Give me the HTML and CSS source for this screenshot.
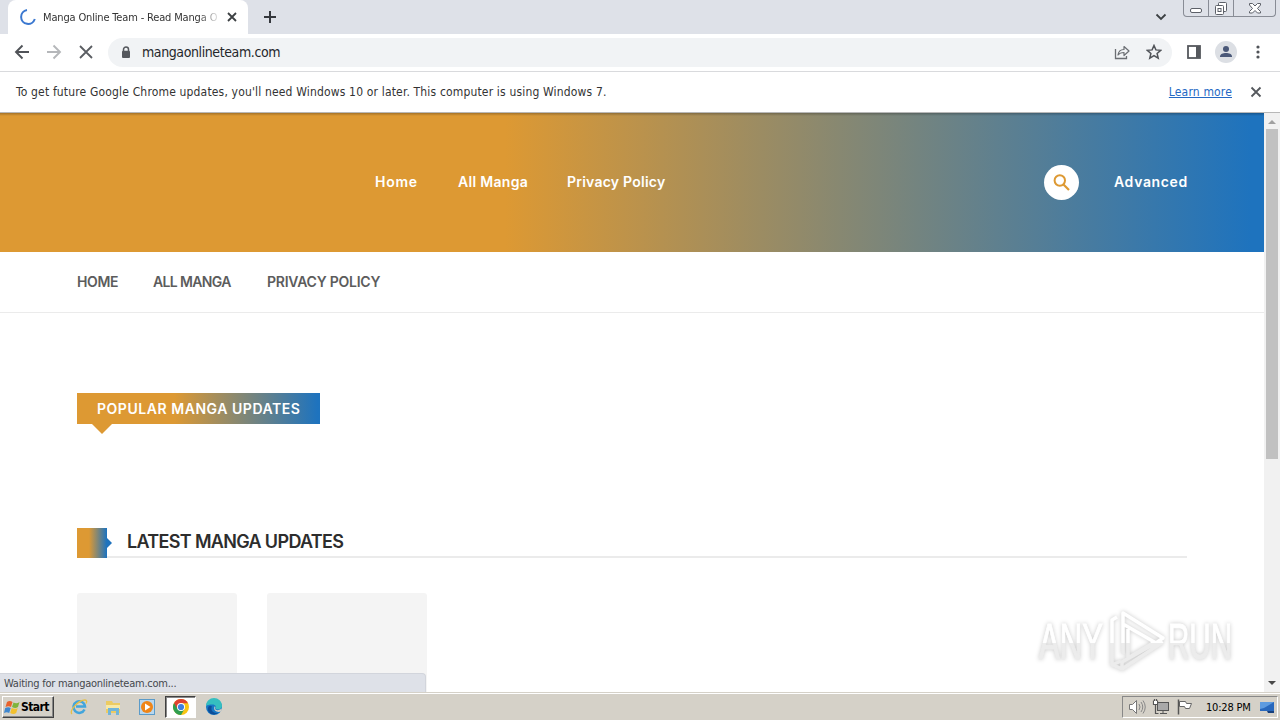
FILE: index.html
```html
<!DOCTYPE html>
<html lang="en">
<head>
    <meta charset="UTF-8">
    <meta name="viewport" content="width=device-width, initial-scale=1.0">
    <title>Manga Online Team - Read Manga Online</title>
    <link rel="stylesheet" href="styles.css">
</head>
<body>

    <!-- tab strip -->
    <div class="tabstrip">
        <div class="tab">
            <svg class="spinner" width="18" height="18" viewBox="0 0 18 18"><path d="M8 2A7 7 0 1 0 15.8 11" fill="none" stroke="#3b78d0" stroke-width="2"/></svg>
            <span class="tab-title">Manga Online Team - Read Manga O</span>
            <svg class="tab-close" width="10" height="10" viewBox="0 0 10 10"><path d="M1 1l8 8M9 1L1 9" stroke="#3c4043" stroke-width="1.8"/></svg>
        </div>
        <svg class="new-tab" width="12" height="12" viewBox="0 0 12 12"><path d="M6 0v12M0 6h12" stroke="#35383d" stroke-width="2"/></svg>
        <svg class="tab-search" width="12" height="8" viewBox="0 0 12 8"><path d="M1.5 1.5L6 6l4.500-4.500" fill="none" stroke="#3c4043" stroke-width="1.8"/></svg>
        <div class="window-buttons">
            <span><svg width="14" height="16" viewBox="0 0 14 16"><rect x="1.500" y="8.500" width="11" height="4" rx="1.500" fill="#fff" stroke="#5c6068"/></svg></span>
            <span><svg width="14" height="16" viewBox="0 0 14 16"><rect x="4.500" y="2.500" width="8" height="9" rx="1" fill="#fff" stroke="#5c6068"/><rect x="1.500" y="5.500" width="8" height="9" rx="1" fill="#fff" stroke="#5c6068"/><rect x="4" y="8.500" width="3" height="3" fill="none" stroke="#5c6068"/></svg></span>
            <span><svg width="14" height="16" viewBox="0 0 14 16"><path d="M1.500 3.500h3L7 6l2.500-2.500h3v1.500L9.500 8.500l3 3V13h-3L7 10.500 4.500 13h-3v-1.500l3-3-3-3.500z" fill="#fff" stroke="#5c6068"/></svg></span>
        </div>
    </div>

    <!-- toolbar -->
    <div class="toolbar">
        <svg class="nav-icon" width="16" height="16" viewBox="0 0 16 16"><path d="M15 8H2M8.500 1.500L2 8l6.500 6.500" fill="none" stroke="#505358" stroke-width="1.900"/></svg>
        <svg class="nav-icon" width="16" height="16" viewBox="0 0 16 16"><path d="M1 8h13M7.500 1.500L14 8l-6.500 6.500" fill="none" stroke="#b5b7ba" stroke-width="1.900"/></svg>
        <svg class="nav-icon" width="16" height="16" viewBox="0 0 16 16"><path d="M2 2l12 12M14 2L2 14" stroke="#5a5d62" stroke-width="1.800"/></svg>
        <div class="omnibox">
            <svg width="10" height="13" viewBox="0 0 10 13"><path d="M2.500 5V3.500a2.500 2.500 0 0 1 5 0V5" fill="none" stroke="#55585d" stroke-width="1.500"/><rect x="1" y="4.800" width="8" height="7.200" rx="1" fill="#55585d"/></svg>
            <span class="url">mangaonlineteam.com</span>
            <svg class="share" width="16" height="16" viewBox="0 0 16 16"><path d="M1.500 5v9.500h11V12" fill="none" stroke="#6b6e73" stroke-width="1.300"/><path d="M4 11C4.500 7 7 5.500 10 5.500V2.500L15 7l-5 4.500V8.500C7.500 8.500 5.500 9 4 11z" fill="none" stroke="#6b6e73" stroke-width="1.200" stroke-linejoin="round"/></svg>
            <svg width="16" height="16" viewBox="0 0 16 16"><path d="M8 1.500l1.900 4.400 4.800.4-3.600 3.200 1.100 4.700L8 11.700l-4.200 2.500 1.100-4.700L1.300 6.300l4.800-.4z" fill="none" stroke="#505358" stroke-width="1.500"/></svg>
        </div>
        <svg class="side-panel" width="14" height="14" viewBox="0 0 14 14"><rect x="1" y="1" width="12" height="12" fill="none" stroke="#55585d" stroke-width="1.800"/><path d="M9 1h4v12H9z" fill="#55585d"/></svg>
        <svg class="avatar" width="22" height="22" viewBox="0 0 22 22"><circle cx="11" cy="11" r="11" fill="#dcdfe4"/><circle cx="11" cy="8" r="3" fill="#4a5878"/><path d="M5 15.500c0-2.500 3-3.500 6-3.500s6 1 6 3.500v.5H5z" fill="#4a5878"/></svg>
        <svg class="kebab" width="4" height="14" viewBox="0 0 4 14"><g fill="#505358"><circle cx="2" cy="2" r="1.600"/><circle cx="2" cy="7" r="1.600"/><circle cx="2" cy="12" r="1.600"/></g></svg>
    </div>

    <div class="infobar">
        <span class="infobar-text">To get future Google Chrome updates, you'll need Windows 10 or later. This computer is using Windows 7.</span>
        <a class="learn-more">Learn more</a>
        <svg width="12" height="12" viewBox="0 0 12 12"><path d="M1.500 1.500l9 9M10.500 1.500l-9 9" stroke="#55585d" stroke-width="1.800"/></svg>
    </div>

    <!-- page -->
    <div class="viewport">
        <div class="page">
            <header class="site-header">
                <nav class="main-nav">
                    <a class="n-home">Home</a>
                    <a class="n-all">All Manga</a>
                    <a class="n-privacy">Privacy Policy</a>
                </nav>
                <div class="search-btn">
                    <svg width="17" height="17" viewBox="0 0 17 17"><circle cx="6.800" cy="6.500" r="5.200" fill="none" stroke="#dd9933" stroke-width="2"/><path d="M10.500 10.500l5.500 5.500" stroke="#dd9933" stroke-width="2.200"/></svg>
                </div>
                <a class="advanced">Advanced</a>
            </header>
            <nav class="sub-nav">
                <a class="s-home">HOME</a>
                <a class="s-all">ALL MANGA</a>
                <a class="s-privacy">PRIVACY POLICY</a>
            </nav>
            <main class="content">
                <div class="popular"><span>POPULAR MANGA UPDATES</span></div>
                <div class="latest">
                    <i class="latest-mark"></i>
                    <h4>LATEST MANGA UPDATES</h4>
                </div>
                <div class="cards">
                    <div class="card"></div>
                    <div class="card"></div>
                </div>
            </main>
        </div>
        <div class="scrollbar">
            <svg width="16" height="16" viewBox="0 0 16 16"><path d="M4 11l4-4 4 4z" fill="#a0a0a0"/></svg>
            <div class="thumb"></div>
            <svg class="down" width="16" height="16" viewBox="0 0 16 16"><path d="M4 5h8L8 9z" fill="#484848"/></svg>
        </div>
        <div class="status-bubble">Waiting for mangaonlineteam.com...</div>
        <svg class="watermark" width="212" height="78" viewBox="0 0 212 78">
            <defs>
                <linearGradient id="wm" x1="0" y1="0" x2="0" y2="78" gradientUnits="userSpaceOnUse">
                    <stop offset=".53" stop-color="#fff"/>
                    <stop offset=".53" stop-color="#ececec"/>
                </linearGradient>
            </defs>
            <g class="wm-text" fill="url(#wm)" stroke="url(#wm)" stroke-width="1">
                <text x="9" y="57" textLength="64" lengthAdjust="spacingAndGlyphs">ANY</text>
                <text x="138" y="57" textLength="64" lengthAdjust="spacingAndGlyphs">RUN</text>
            </g>
            <path d="M87 15l-5 3v45l9-4M93 52V11l40 25-7 5-33-19M83 63l9 4 41-27M92 67v-7l34-19M98 27v29l25-15" fill="none" stroke="url(#wm)" stroke-width="3.500" stroke-linejoin="round"/>
        </svg>
    </div>

    <!-- windows taskbar -->
    <div class="taskbar">
        <div class="start">
            <svg width="17" height="15" viewBox="0 0 17 15"><path d="M3 2c2-1.500 4-1 5.500 0L7 7C5.500 6 3.500 6 1.500 7z" fill="#e8622c"/><path d="M9.500 2.500c2 1 4 1 6-.5L14 7c-2 1.500-4 1-6 0z" fill="#7fb43c"/><path d="M1.200 8c2-1 4-1 5.500 0l-1.500 5C3.500 12 2 12 0 13z" fill="#3f87cf"/><path d="M7.700 8c2 1 4 1.200 6 0l-1.500 5c-2 1.500-4 1-6 0z" fill="#f2c02e"/></svg>
            <span>Start</span>
        </div>
        <div class="task">
            <svg width="18" height="18" viewBox="0 0 18 18"><path d="M14.500 11.500A5.800 5.800 0 1 1 15 8.500H6" fill="none" stroke="#42a5dc" stroke-width="2.500"/><path d="M2 16C-1 13 8 2 15 2c2 0 2 2 1 3.500" fill="none" stroke="#e6bf45" stroke-width="1.300"/></svg>
        </div>
        <div class="task">
            <svg width="18" height="18" viewBox="0 0 18 18"><path d="M2 3h6l1 2h7v10H2z" fill="#eccb62"/><path d="M2 7h14v4H2z" fill="#f8e9a6"/><path d="M4 10h11v7h-3v-4H7v4H4z" fill="#71b5d9"/></svg>
        </div>
        <div class="task">
            <svg width="18" height="18" viewBox="0 0 18 18"><rect x="1.500" y="1.500" width="15" height="15" fill="#b9d7ee" stroke="#5b9bc9"/><circle cx="9" cy="9" r="6" fill="#ef8518"/><path d="M7 5.500v7L12.500 9z" fill="#fff"/></svg>
        </div>
        <div class="task active">
            <svg width="16" height="16" viewBox="0 0 16 16"><circle cx="8" cy="8" r="8" fill="#f9c513"/><path d="M8 8L1.070 4A8 8 0 0 0 8 16l3.500-6z" fill="#2f9e50"/><path d="M8 4.200h6.930A8 8 0 0 0 1.070 4L4.500 10z" fill="#df4232"/><circle cx="8" cy="8" r="4" fill="#fff"/><circle cx="8" cy="8" r="3.100" fill="#3f7fe0"/></svg>
        </div>
        <div class="task">
            <svg width="18" height="18" viewBox="0 0 18 18"><circle cx="9" cy="9" r="8" fill="#1677c5"/><path d="M1 8a8 8 0 0 1 16 0c0 3-3 4-6.500 3 1.500-2 0-4.500-3-4.500C4.500 6.500 2 7 1 8z" fill="#35bfc0"/><path d="M7 8.500c-2 3 1 7 6 6.500-6 4-11-1-10-5 .5-2 2-3 4-1.500z" fill="#0c4e99"/><path d="M9.500 8.500c2 0 0 2 1 3 2 1.500 5 0 6.500-1l-1 3c-4 1.500-8-1-6.500-5z" fill="#d5d1c8"/></svg>
        </div>
        <div class="tray">
            <svg width="18" height="18" viewBox="0 0 18 18"><path d="M1.500 6.500h3l4-4v13l-4-4h-3z" fill="#fff" stroke="#777"/><path d="M11 6q2 3 0 6M13 4q3.500 5 0 10M15 2.500q4.500 6.500 0 13" fill="none" stroke="#888"/></svg>
            <svg width="18" height="18" viewBox="0 0 18 18"><rect x="5.500" y="4.500" width="11" height="8" fill="#a9a9a9" stroke="#555"/><path d="M8 15.500h7M11 13v2" stroke="#555"/><path d="M1.500 2.500v4h4v-4M2.500 1v2M4.500 1v2M3.500 7v8.500h3" fill="none" stroke="#555" stroke-width="1.200"/><path d="M2 3h3v3H2z" fill="#fff"/></svg>
            <svg width="18" height="18" viewBox="0 0 18 18"><path d="M3.500 3.500h6l1 2h5l-2 5h-4l-1-2h-5z" fill="#fff" stroke="#666"/><path d="M2.500 1.500v15" stroke="#555" stroke-width="1.500"/></svg>
            <span class="clock">10:28 PM</span>
            <svg width="16" height="16" viewBox="0 0 16 16"><path d="M1 3h14v9H1z" fill="#2868bd"/><path d="M1 3h14L5 9 1 10z" fill="#5d9be0"/><path d="M8 12h7v2H9z" fill="#163f7d"/></svg>
        </div>
    </div>

</body>
</html>
```
FILE: styles.css
```css
* {
    box-sizing: border-box;
}
body {
    margin: 0;
    width: 1280px;
    height: 720px;
    overflow: hidden;
    display: flex;
    flex-direction: column;
    background: #fff;
    font-family: "DejaVu Sans Condensed", "DejaVu Sans", sans-serif;
    font-stretch: condensed;
    color: #333;
}
svg {
    display: block;
    flex: none;
}
span, a {
    white-space: nowrap;
}

/* tab strip */
.tabstrip {
    height: 34px;
    flex: none;
    display: flex;
    align-items: center;
    background: #dee1e8;
    padding-left: 8px;
}
.tab {
    width: 240px;
    height: 34px;
    display: flex;
    align-items: center;
    background: #fff;
    border-radius: 8px 8px 0 0;
    padding: 0 11px;
}
.tab-title {
    width: 175px;
    margin-left: 6px;
    font-size: 11px;
    letter-spacing: -0.16px;
    -webkit-mask-image: linear-gradient(to right, #000 155px, transparent 178px);
}
.tab-close {
    margin-left: 9px;
}
.new-tab {
    margin-left: 16px;
}
.tab-search {
    margin-left: auto;
}
.window-buttons {
    align-self: flex-start;
    display: flex;
    width: 93px;
    height: 17px;
    margin: 0 4px 0 16px;
    border: 1px solid #888c95;
    border-top: 0;
    border-radius: 0 0 4px 4px;
}
.window-buttons span {
    width: 25px;
    display: flex;
    justify-content: center;
    border-right: 1px solid #888c95;
}
.window-buttons span:last-child {
    flex: 1;
    border-right: 0;
}

/* toolbar */
.toolbar {
    height: 38px;
    flex: none;
    display: flex;
    align-items: center;
    padding: 0 20px 1px 14px;
    border-bottom: 1px solid #d9dadd;
}
.nav-icon {
    margin-right: 16px;
}
.omnibox {
    width: 1064px;
    height: 29px;
    display: flex;
    align-items: center;
    margin-left: -2px;
    padding: 0 10px 0 13px;
    border-radius: 15px;
    background: #f1f3f5;
}
.url {
    margin-left: 11px;
    font-size: 14px;
    letter-spacing: -0.4px;
    color: #25272b;
}
.share {
    margin-left: auto;
    margin-right: 16px;
}
.side-panel {
    margin-left: 15px;
}
.avatar {
    margin-left: 14px;
}
.kebab {
    margin-left: auto;
}

.infobar {
    height: 41px;
    flex: none;
    display: flex;
    align-items: center;
    padding: 0 18px 1px 16px;
    border-bottom: 1px solid #b8b8b8;
    font-size: 12px;
    letter-spacing: 0.165px;
}
.learn-more {
    margin-left: auto;
    margin-right: 18px;
    color: #2468c4;
    text-decoration: underline;
}

/* page */
.viewport {
    position: relative;
    flex: 1;
    display: flex;
    min-height: 0;
    overflow: hidden;
    font-family: Inter, sans-serif;
}
.page {
    width: 1264px;
}
.site-header {
    height: 139px;
    display: flex;
    align-items: center;
    padding: 0 76px 0 375px;
    background:
        linear-gradient(rgba(0, 0, 0, 0.25), transparent 3px),
        linear-gradient(to right, #dd9933 40%, #1e73be 99%);
    color: #fff;
    font-size: 14px;
    font-weight: 600;
}
.main-nav {
    display: flex;
    gap: 40px;
    padding-bottom: 2px;
}
.n-home {
    width: 43px;
    letter-spacing: 0.75px;
}
.n-all {
    width: 69px;
    letter-spacing: 0.3px;
}
.n-privacy {
    letter-spacing: 0.24px;
}
.search-btn {
    width: 35px;
    height: 35px;
    display: flex;
    align-items: center;
    justify-content: center;
    margin-left: auto;
    border-radius: 50%;
    background: #fff;
}
.advanced {
    width: 74px;
    margin-left: 35px;
    padding-bottom: 2px;
    letter-spacing: 0.65px;
}
.sub-nav {
    height: 61px;
    display: flex;
    align-items: center;
    padding: 0 0 2px 77px;
    border-bottom: 1px solid #ebebeb;
    font-size: 14px;
    font-weight: 600;
    color: #5c5c5c;
}
.s-home {
    width: 76px;
    letter-spacing: -0.4px;
}
.s-all {
    width: 114px;
    letter-spacing: -0.65px;
}
.s-privacy {
    letter-spacing: -0.24px;
}
.content {
    padding: 80px 77px 0;
}
.popular {
    position: relative;
    width: 243px;
    height: 31px;
    padding-left: 20px;
    line-height: 31px;
    background: linear-gradient(to right, #dd9933 40%, #1e73be 99%);
    color: #fff;
    font-size: 14px;
    font-weight: 600;
    letter-spacing: 0.54px;
}
.popular::after {
    content: "";
    position: absolute;
    left: 15px;
    top: 31px;
    border: 10px solid transparent;
    border-top-color: #dd9933;
    border-bottom: 0;
}
.latest {
    height: 30px;
    display: flex;
    margin-top: 104px;
    box-shadow: inset 0 -2px #ebebeb;
}
.latest-mark {
    position: relative;
    width: 30px;
    height: 30px;
    background: linear-gradient(to right, #dd9933 40%, #1e73be 99%);
}
.latest-mark::after {
    content: "";
    position: absolute;
    left: 30px;
    top: 10px;
    border: 5px solid transparent;
    border-left-color: #1e73be;
    border-right: 0;
}
.latest h4 {
    margin: 0 0 0 20px;
    line-height: 27px;
    font-size: 18px;
    font-weight: 600;
    letter-spacing: -0.67px;
    color: #2d2d2d;
    white-space: nowrap;
}
.cards {
    display: flex;
    gap: 30px;
    margin-top: 35px;
}
.card {
    width: 160px;
    height: 120px;
    border-radius: 3px;
    background: #f4f4f4;
}
.scrollbar {
    width: 16px;
    display: flex;
    flex-direction: column;
    background: #f1f1f1;
}
.thumb {
    width: 12px;
    height: 330px;
    margin-left: 2px;
    background: #c1c1c1;
}
.down {
    margin-top: auto;
}
.status-bubble {
    position: absolute;
    left: 0;
    bottom: 0;
    width: 426px;
    height: 19px;
    padding-left: 4px;
    line-height: 19px;
    background: #dee1e8;
    border: 1px solid #d2d5dc;
    border-width: 1px 1px 0 0;
    border-radius: 0 4px 0 0;
    font-family: "DejaVu Sans Condensed", "DejaVu Sans", sans-serif;
    font-size: 11px;
    letter-spacing: -0.25px;
    color: #45484d;
}
.watermark {
    position: absolute;
    left: 1030px;
    top: 489px;
    overflow: visible;
    filter: drop-shadow(0 0 2px rgba(0, 0, 0, 0.22));
}
.wm-text {
    font-family: "Liberation Sans", sans-serif;
    font-size: 50px;
}

/* taskbar */
.taskbar {
    height: 28px;
    flex: none;
    display: flex;
    align-items: center;
    padding: 1px 2px 0;
    background: #d5d1c8;
    border-top: 1px solid #d5d1c8;
    box-shadow: inset 0 1px #fff;
}
.start {
    width: 52px;
    height: 22px;
    display: flex;
    align-items: center;
    padding-left: 1px;
    border: 1px solid;
    border-color: #fff #404040 #404040 #fff;
    box-shadow: inset -1px -1px #888;
    font-size: 12px;
    font-weight: bold;
    color: #000;
    margin-right: 8px;
}
.start span {
    letter-spacing: -0.6px;
}
.task {
    width: 34px;
    height: 22px;
    display: flex;
    align-items: center;
    justify-content: center;
}
.task.active {
    width: 31px;
    margin: 0 1px;
    background: #fff;
    border: 1px solid;
    border-color: #404040 #fff #fff #404040;
    box-shadow: inset 1px 1px #888;
}
.tray {
    width: 156px;
    height: 22px;
    display: flex;
    align-items: center;
    margin-left: auto;
    padding-left: 5px;
    gap: 6px;
    border: 1px solid;
    border-color: #888 #fff #fff #888;
}
.clock {
    width: 46px;
    margin: 0 1px 0 6px;
    font-size: 11px;
    letter-spacing: -0.2px;
    color: #000;
}
```
